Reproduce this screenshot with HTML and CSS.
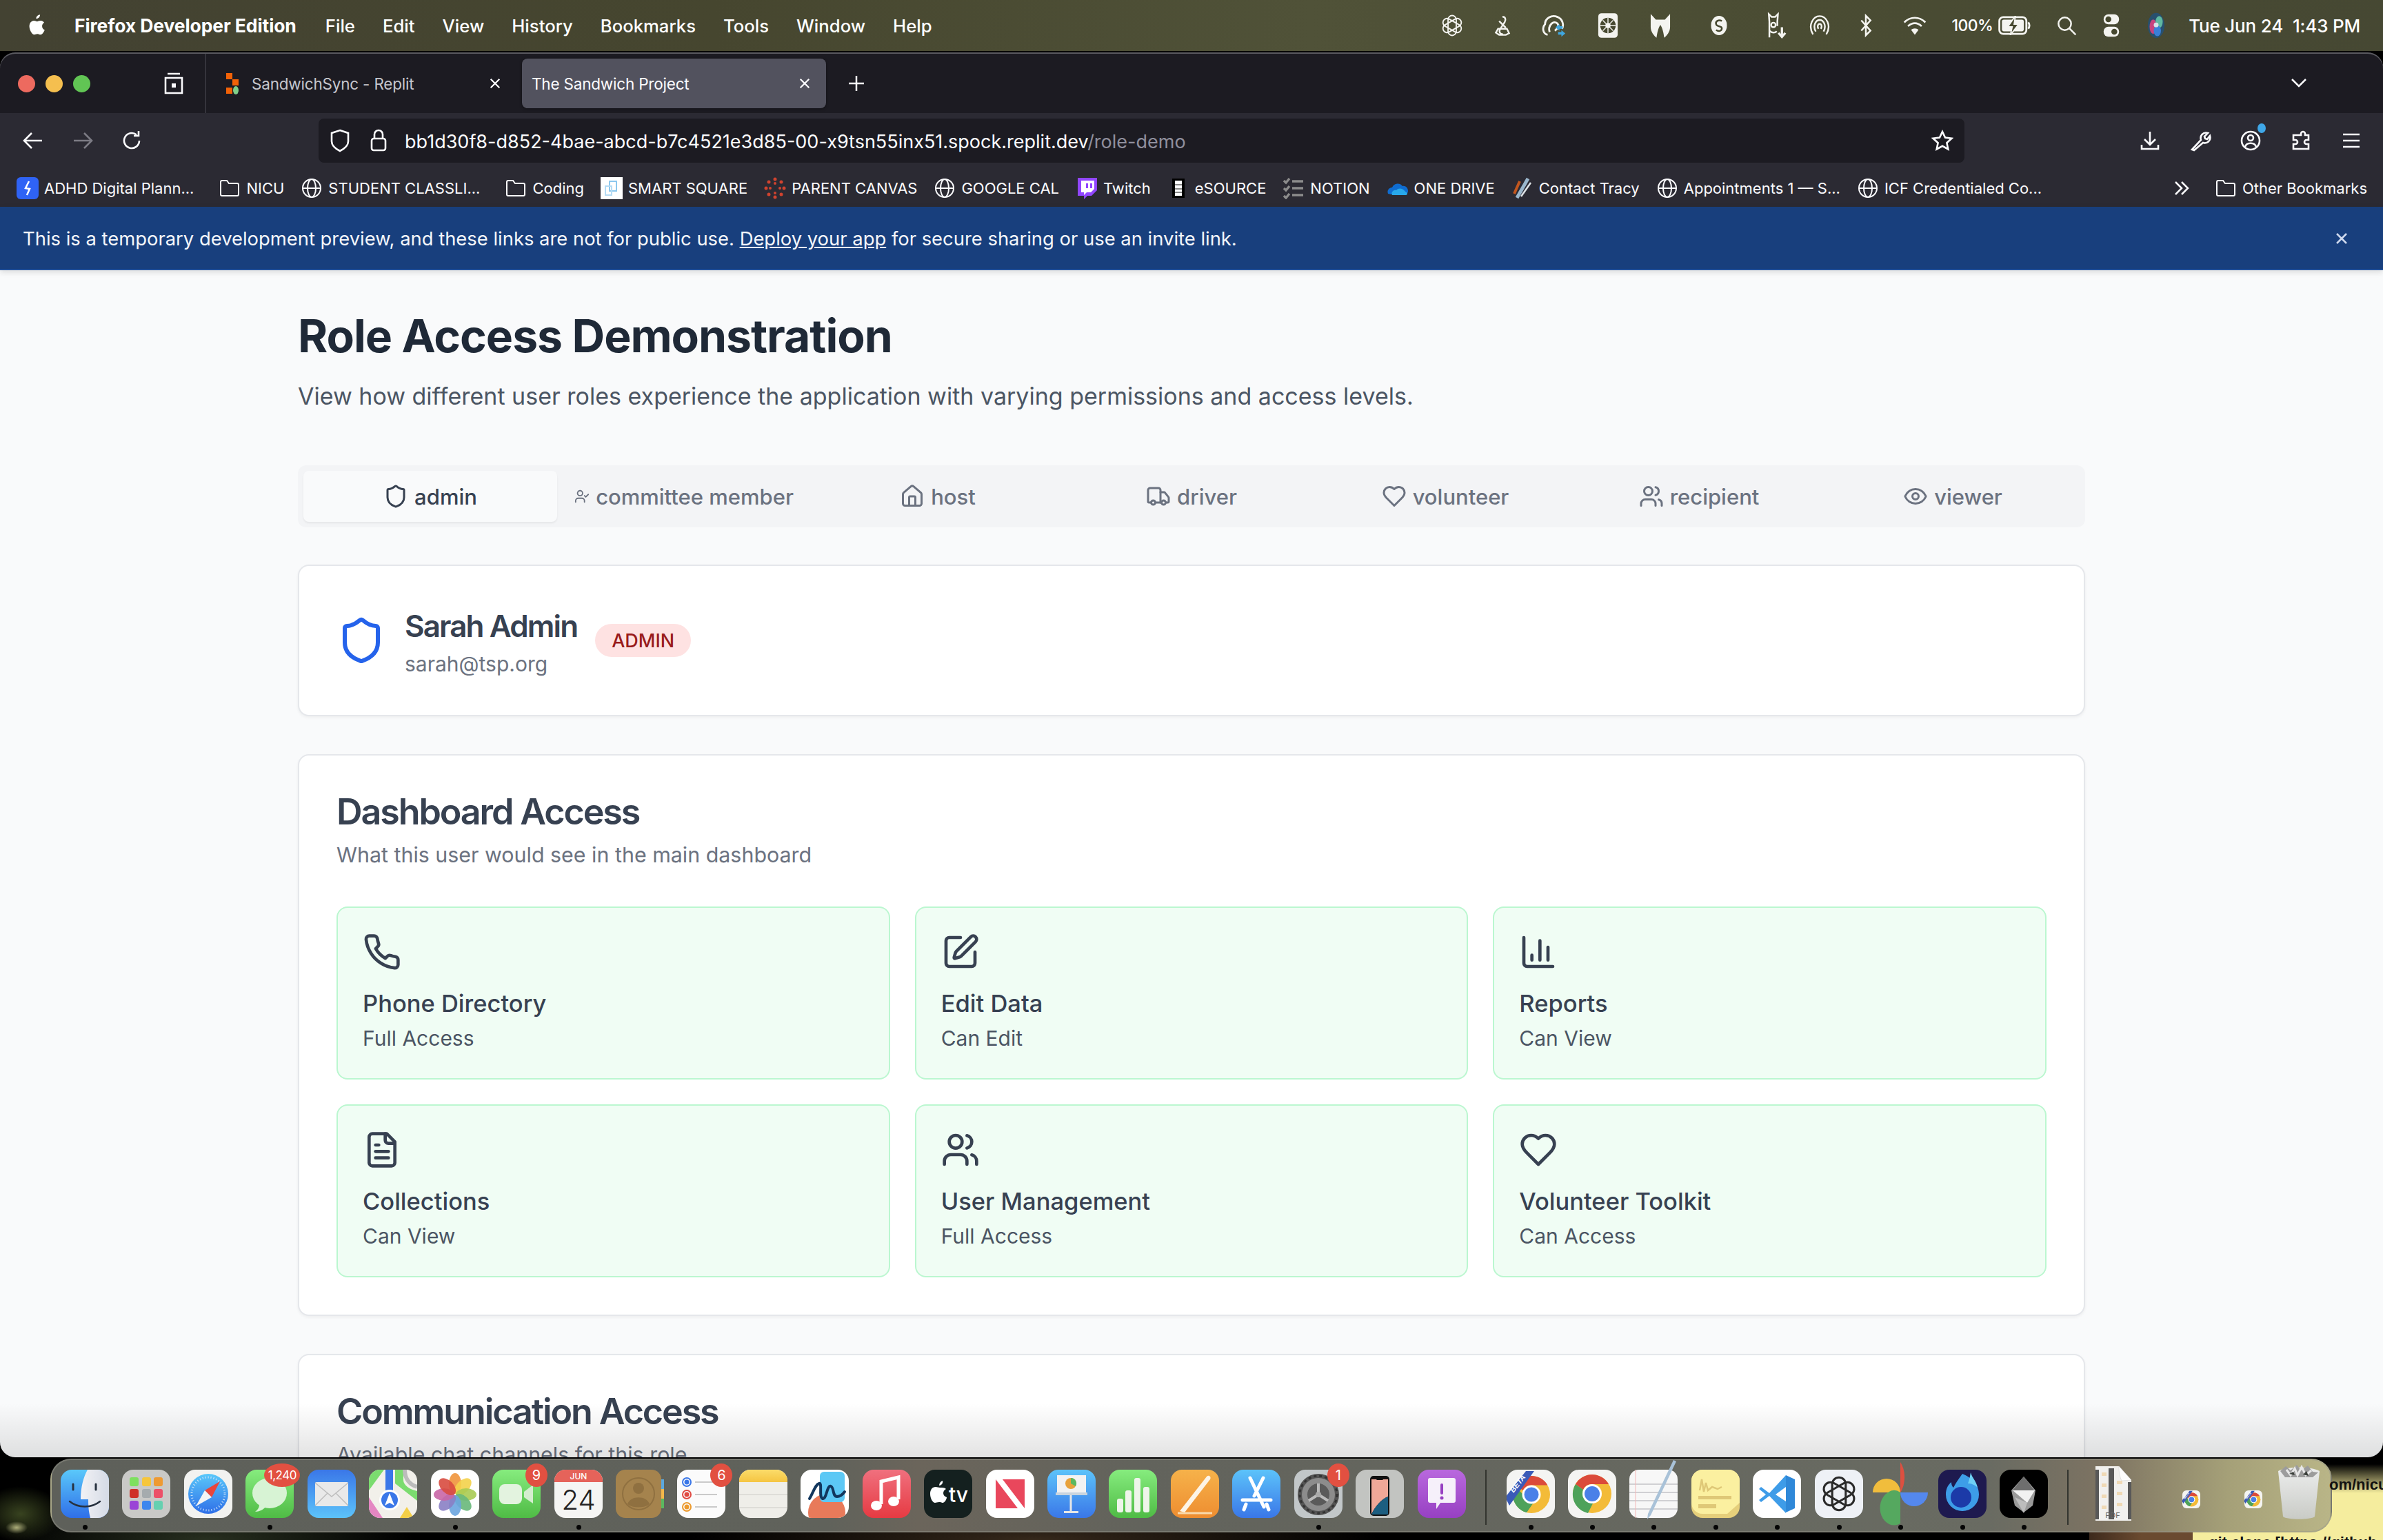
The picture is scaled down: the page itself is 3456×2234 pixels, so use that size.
FILE: index.html
```html
<!DOCTYPE html>
<html lang="en">
<head>
<meta charset="utf-8">
<title>The Sandwich Project</title>
<link rel="stylesheet" href="styles.css">
</head>
<body>
<svg class="defs" aria-hidden="true">
  <defs>
    <linearGradient id="gBlue" x1="0" y1="0" x2="0" y2="1"><stop offset="0" stop-color="#5ac8fa"/><stop offset="1" stop-color="#2f6fe8"/></linearGradient>
    <linearGradient id="gGreen" x1="0" y1="0" x2="0" y2="1"><stop offset="0" stop-color="#86ec7e"/><stop offset="1" stop-color="#4fbb45"/></linearGradient>
    <linearGradient id="gMail" x1="0" y1="0" x2="0" y2="1"><stop offset="0" stop-color="#3a77e8"/><stop offset="1" stop-color="#5cc3fa"/></linearGradient>
    <linearGradient id="gRed" x1="0" y1="0" x2="0" y2="1"><stop offset="0" stop-color="#f0707e"/><stop offset="1" stop-color="#e63a42"/></linearGradient>
    <linearGradient id="gOrange" x1="0" y1="0" x2="0" y2="1"><stop offset="0" stop-color="#f6b24a"/><stop offset="1" stop-color="#ee8d30"/></linearGradient>
    <linearGradient id="gPurple" x1="0" y1="0" x2="0" y2="1"><stop offset="0" stop-color="#b968de"/><stop offset="1" stop-color="#9740c2"/></linearGradient>
    <linearGradient id="gNote" x1="0" y1="0" x2="0" y2="1"><stop offset="0" stop-color="#fbdc6a"/><stop offset="1" stop-color="#f5c542"/></linearGradient>
    <linearGradient id="gFace" x1="0" y1="0" x2="1" y2="0"><stop offset="0" stop-color="#f2f2f5"/><stop offset="1" stop-color="#d5dbe6"/></linearGradient>
    <linearGradient id="gCan" x1="0" y1="0" x2="0" y2="1"><stop offset="0" stop-color="#eceded"/><stop offset="1" stop-color="#c9cbc6"/></linearGradient>
    <clipPath id="iconClip"><rect width="70" height="70" rx="16"/></clipPath>

    <symbol id="i-shield" viewBox="0 0 24 24"><path d="M20 13c0 5-3.5 7.5-7.66 8.95a1 1 0 0 1-.67-.01C7.5 20.5 4 18 4 13V6a1 1 0 0 1 1-1c2 0 4.5-1.2 6.24-2.72a1.17 1.17 0 0 1 1.52 0C14.51 3.81 17 5 19 5a1 1 0 0 1 1 1z"/></symbol>
    <symbol id="i-usercheck" viewBox="0 0 24 24"><path d="M16 21v-2a4 4 0 0 0-4-4H6a4 4 0 0 0-4 4v2"/><circle cx="9" cy="7" r="4"/><path d="M16 11l2 2 4-4"/></symbol>
    <symbol id="i-home" viewBox="0 0 24 24"><path d="M15 21v-8a1 1 0 0 0-1-1h-4a1 1 0 0 0-1 1v8"/><path d="M3 10a2 2 0 0 1 .709-1.528l7-5.999a2 2 0 0 1 2.582 0l7 5.999A2 2 0 0 1 21 10v9a2 2 0 0 1-2 2H5a2 2 0 0 1-2-2z"/></symbol>
    <symbol id="i-truck" viewBox="0 0 24 24"><path d="M14 18V6a2 2 0 0 0-2-2H4a2 2 0 0 0-2 2v11a1 1 0 0 0 1 1h2"/><path d="M15 18H9"/><path d="M19 18h2a1 1 0 0 0 1-1v-3.65a1 1 0 0 0-.22-.624l-3.48-4.35A1 1 0 0 0 17.52 8H14"/><circle cx="17" cy="18" r="2"/><circle cx="7" cy="18" r="2"/></symbol>
    <symbol id="i-heart" viewBox="0 0 24 24"><path d="M19 14c1.49-1.46 3-3.21 3-5.5A5.5 5.5 0 0 0 16.5 3c-1.76 0-3 .5-4.5 2-1.5-1.5-2.74-2-4.5-2A5.5 5.5 0 0 0 2 8.5c0 2.3 1.5 4.05 3 5.5l7 7Z"/></symbol>
    <symbol id="i-users" viewBox="0 0 24 24"><path d="M16 21v-2a4 4 0 0 0-4-4H6a4 4 0 0 0-4 4v2"/><circle cx="9" cy="7" r="4"/><path d="M22 21v-2a4 4 0 0 0-3-3.87"/><path d="M16 3.13a4 4 0 0 1 0 7.75"/></symbol>
    <symbol id="i-eye" viewBox="0 0 24 24"><path d="M2.062 12.348a1 1 0 0 1 0-.696 10.75 10.75 0 0 1 19.876 0 1 1 0 0 1 0 .696 10.75 10.75 0 0 1-19.876 0"/><circle cx="12" cy="12" r="3"/></symbol>
    <symbol id="i-phone" viewBox="0 0 24 24"><path d="M22 16.92v3a2 2 0 0 1-2.18 2 19.79 19.79 0 0 1-8.63-3.07 19.5 19.5 0 0 1-6-6 19.79 19.79 0 0 1-3.07-8.67A2 2 0 0 1 4.11 2h3a2 2 0 0 1 2 1.72 12.84 12.84 0 0 0 .7 2.81 2 2 0 0 1-.45 2.11L8.09 9.91a16 16 0 0 0 6 6l1.27-1.27a2 2 0 0 1 2.11-.45 12.84 12.84 0 0 0 2.81.7A2 2 0 0 1 22 16.92z"/></symbol>
    <symbol id="i-edit" viewBox="0 0 24 24"><path d="M12 3H5a2 2 0 0 0-2 2v14a2 2 0 0 0 2 2h14a2 2 0 0 0 2-2v-7"/><path d="M18.375 2.625a1 1 0 0 1 3 3l-9.013 9.014a2 2 0 0 1-.853.505l-2.873.84a.5.5 0 0 1-.62-.62l.84-2.873a2 2 0 0 1 .506-.852z"/></symbol>
    <symbol id="i-chart" viewBox="0 0 24 24"><path d="M3 3v16a2 2 0 0 0 2 2h16"/><path d="M18 17V9"/><path d="M13 17V5"/><path d="M8 17v-3"/></symbol>
    <symbol id="i-file" viewBox="0 0 24 24"><path d="M15 2H6a2 2 0 0 0-2 2v16a2 2 0 0 0 2 2h12a2 2 0 0 0 2-2V7Z"/><path d="M14 2v4a2 2 0 0 0 2 2h4"/><path d="M10 9H8"/><path d="M16 13H8"/><path d="M16 17H8"/></symbol>
    <symbol id="b-folder" viewBox="0 0 32 32"><path d="M3 7a2 2 0 0 1 2-2h7l3 4h12a2 2 0 0 1 2 2v14a2 2 0 0 1-2 2H5a2 2 0 0 1-2-2z"/></symbol>
    <symbol id="b-globe" viewBox="0 0 32 32"><circle cx="16" cy="16" r="13"/><ellipse cx="16" cy="16" rx="6" ry="13"/><path d="M3 16h26"/></symbol>
    <symbol id="s-knot" viewBox="0 0 40 40"><g transform="translate(20 20)"><rect x="-7" y="-17" width="14" height="34" rx="7"/><rect x="-7" y="-17" width="14" height="34" rx="7" transform="rotate(60)"/><rect x="-7" y="-17" width="14" height="34" rx="7" transform="rotate(120)"/></g></symbol>
    <symbol id="a-chrome" viewBox="0 0 70 70">
      <rect width="70" height="70" rx="16" fill="#f4f4f2"/>
      <circle cx="36" cy="36" r="27" fill="#f3bb38"/>
      <path d="M36 9a27 27 0 0 1 23.4 13.5H36A13.5 13.5 0 0 0 24 30L12.6 22.5A27 27 0 0 1 36 9z" fill="#db4a3a"/>
      <path d="M12.6 22.5 24 42a13.5 13.5 0 0 0 14 7L29 62A27 27 0 0 1 12.6 22.5z" fill="#4ea25a"/>
      <path d="M12 24 9 36a27 27 0 0 0 20 26L38 49a13.5 13.5 0 0 1-14-13z" fill="#4ea25a"/>
      <circle cx="36" cy="36" r="13.5" fill="#fff"/><circle cx="36" cy="36" r="10.5" fill="#4a80e8"/>
      <path d="M0 44 30 6l12 0L6 56z" fill="#3a5bb8" transform="translate(-2 -4)"/>
      <text x="0" y="0" class="beta" transform="translate(10 34) rotate(-52)">BETA</text>
    </symbol>
  </defs>
</svg>

<div class="wallpaper">
  <span class="bg-text-a">om/nicu</span>
  <span class="bg-text-b">git clone [https://github</span>
</div>

<header class="menubar">
  <svg class="apple" viewBox="0 0 24 28"><path d="M17 1c.2 2.2-1.900 5-4.600 4.800C12.100 3.300 14.600 1.200 17 1zM19.500 14.800c0-2.800 2.200-4.100 2.400-4.300-1.400-2-3.400-2.300-4.100-2.300-1.800-.2-3.400 1-4.300 1s-2.200-1-3.700-1c-1.900 0-3.600 1.100-4.600 2.800-2 3.400-.5 8.400 1.400 11.200.9 1.300 2.100 2.900 3.600 2.800 1.400-.1 2-.9 3.700-.9s2.200.9 3.700.9 2.500-1.400 3.400-2.700c1.100-1.500 1.500-3 1.500-3.100-.1 0-3-1.100-3-4.400z"/></svg>
  <nav class="menu">
    <b class="app-name">Firefox Developer Edition</b>
    <span>File</span><span>Edit</span><span>View</span><span>History</span><span>Bookmarks</span><span>Tools</span><span>Window</span><span>Help</span>
  </nav>
  <div class="status">
    <svg class="st st1" viewBox="0 0 40 40"><use href="#s-knot"/></svg>
    <svg class="st st2" viewBox="0 0 40 40"><path d="M20 4c5 0 7 5 4 10l-8 12c-3 5-1 10 5 10M12 26h16l4 8-6 3H14l-6-4zM14 12l12 12" /></svg>
    <svg class="st st3" viewBox="0 0 44 40"><path d="M12 34C5 33 3 24 8 18 8 9 18 3 27 7c8 3 10 12 7 18M15 30c-3-9 5-19 12-13 3 3 0 8-4 11"/><path class="st-blue" d="M30 18l-6 5 6 5v-3h5v-4h-5zM33 27l6 5-6 5v-3h-5v-4h5z"/></svg>
    <svg class="st st4" viewBox="0 0 32 40"><rect class="st-fill" x="1" y="1" width="30" height="38" rx="5"/><circle class="st-cut" cx="16" cy="20" r="12"/><circle class="st-fill" cx="16" cy="20" r="4"/><path class="st-spokes" d="M16 8v24M4 20h24M8 12l16 16M24 12 8 28"/></svg>
    <svg class="st st5" viewBox="0 0 32 40"><path class="st-fill" d="M1 2l8 9h14l8-9v20c0 8-5 13-9 17-1-6-2-14-6-20-4 6-5 14-6 20-4-4-9-9-9-17z"/></svg>
    <svg class="st st6" viewBox="0 0 34 40"><ellipse class="st-fill" cx="17" cy="20" rx="14" ry="17"/><path class="st-cutline" d="M22 12c-6-3-12 1-10 6s10 2 10 7-6 6-10 3"/></svg>
    <svg class="st st7" viewBox="0 0 40 46"><path d="M8 44V16l-1-13 5 5h6l5-5-1 13v8M8 32c5 5 10 4 13 1"/><circle cx="15" cy="22" r="4"/><path class="st-solidline" d="M30 26v16M24 36l6 7 6-7"/></svg>
    <svg class="st st8" viewBox="0 0 40 40"><path d="M8 36C-2 20 8 3 20 3s22 17 12 33M13 31C7 20 13 10 20 10s13 10 7 21M18 26c-3-4-1-9 2-9s5 5 2 9"/></svg>
    <svg class="st st9" viewBox="0 0 24 40"><path d="M4 11l16 18-8 8V3l8 8L4 29"/></svg>
    <svg class="st st10" viewBox="0 0 40 34"><path d="M3 12c10-10 24-10 34 0M9 18c7-6 15-6 22 0"/><path class="st-fill" d="M20 32l-6-8c3-3 9-3 12 0z"/></svg>
    <span class="batt-text">100%</span>
    <svg class="st st11" viewBox="0 0 50 30"><rect x="1" y="2" width="42" height="26" rx="6"/><rect class="st-fill" x="5" y="6" width="34" height="18" rx="3"/><path class="st-dark" d="M26 0 14 17h7l-3 13 13-17h-7z"/><path class="st-thin" d="M46 10c2 3 2 7 0 10"/></svg>
    <svg class="st st12" viewBox="0 0 36 36"><circle cx="15" cy="15" r="11"/><path d="M23 23l11 11"/></svg>
    <svg class="st st13" viewBox="0 0 28 40"><rect class="st-fill" x="1" y="1" width="26" height="17" rx="8"/><circle class="st-cut" cx="9" cy="9.500" r="5"/><rect class="st-fill" x="1" y="22" width="26" height="17" rx="8"/><circle class="st-cut" cx="19" cy="30.500" r="5"/></svg>
    <svg class="st st14" viewBox="0 0 30 44"><ellipse cx="15" cy="22" rx="14" ry="21" class="siri-base"/><ellipse cx="10" cy="24" rx="6" ry="12" class="siri-pink"/><ellipse cx="20" cy="16" rx="6" ry="10" class="siri-green"/><ellipse cx="17" cy="31" rx="6" ry="9" class="siri-blue"/><circle cx="15" cy="21" r="4" class="siri-white"/></svg>
    <time class="clock"><span>Tue Jun 24</span><span>1:43 PM</span></time>
  </div>
</header>

<main class="window">
  <div class="tabstrip">
    <div class="lights"><i class="l-red"></i><i class="l-yel"></i><i class="l-grn"></i></div>
    <svg class="tb-ico sidebar-ico" viewBox="0 0 30 32"><path d="M6 2h18M3 8h24v22H3z"/><rect class="tb-fill" x="12" y="16" width="6" height="6"/></svg>
    <div class="tabs">
      <div class="tab">
        <svg class="favicon" viewBox="0 0 24 32"><rect x="3" y="1" width="9" height="9" fill="#f26207"/><rect x="12" y="10" width="9" height="9" fill="#f26207"/><rect x="3" y="22" width="9" height="9" fill="#f26207"/><ellipse cx="17" cy="26" rx="4" ry="6" fill="#7fd08a"/></svg>
        <span class="tab-title">SandwichSync - Replit</span>
        <svg class="tab-x" viewBox="0 0 20 20"><path d="M3 3l14 14M17 3 3 17"/></svg>
      </div>
      <div class="tab tab-on">
        <span class="tab-title">The Sandwich Project</span>
        <svg class="tab-x" viewBox="0 0 20 20"><path d="M3 3l14 14M17 3 3 17"/></svg>
      </div>
      <svg class="tab-plus" viewBox="0 0 24 24"><path d="M12 1v22M1 12h22"/></svg>
    </div>
    <svg class="tab-chev" viewBox="0 0 24 14"><path d="M2 2l10 10L22 2"/></svg>
  </div>

  <div class="chrome">
    <div class="toolbar">
      <svg class="tb-ico" viewBox="0 0 32 32"><path d="M29 16H4M14 5 3 16l11 11"/></svg>
      <svg class="tb-ico tb-dim" viewBox="0 0 32 32"><path d="M3 16h25M18 5l11 11-11 11"/></svg>
      <svg class="tb-ico" viewBox="0 0 32 32"><path d="M26 16a11 11 0 1 1-4-8.500M25 2v7h-7"/></svg>
      <div class="urlbar">
        <svg class="ub-ico" viewBox="0 0 30 34"><path d="M15 2l12 4v12c0 7-6 11-12 14C9 29 3 25 3 18V6z"/></svg>
        <svg class="ub-ico" viewBox="0 0 26 34"><rect x="3" y="14" width="20" height="17" rx="3"/><path d="M7 14V8a6 6 0 0 1 12 0v6"/></svg>
        <span class="url">bb1d30f8-d852-4bae-abcd-b7c4521e3d85-00-x9tsn55inx51.spock.replit.dev<em>/role-demo</em></span>
        <svg class="ub-ico ub-star" viewBox="0 0 32 32"><path d="M16 3l4 8.600 9.400 1.200-7 6.400 1.900 9.300L16 23.800l-8.300 4.700 1.900-9.300-7-6.400 9.400-1.200z"/></svg>
      </div>
      <div class="tools">
        <svg class="tb-ico" viewBox="0 0 32 32"><path d="M16 3v19M8 14l8 8 8-8M4 22v6h24v-6"/></svg>
        <svg class="tb-ico" viewBox="0 0 32 32"><path d="M4 29 17 15c-2-6 3-12 10-10l-5 5 1 3 3 1 4-5c2 7-4 12-10 10L7 30z"/></svg>
        <span class="acct">
          <svg class="tb-ico" viewBox="0 0 32 32"><circle cx="16" cy="16" r="13"/><circle cx="16" cy="12" r="4"/><path d="M8 25c2-7 14-7 16 0"/></svg>
          <i class="acct-dot"></i>
        </span>
        <svg class="tb-ico" viewBox="0 0 32 32"><path d="M12 8h4V6a3 3 0 0 1 6 0v2h5v7h-3a3 3 0 0 0 0 6h3v7H5v-7h3a3 3 0 0 0 0-6H5V8z"/></svg>
        <svg class="tb-ico" viewBox="0 0 32 32"><path d="M4 7h24M4 16h24M4 25h24"/></svg>
      </div>
    </div>
    <div class="bookmarks">
      <a class="bm"><svg class="bm-ico" viewBox="0 0 32 32"><rect width="32" height="32" rx="6" fill="#2f63f5"/><path class="bm-white" d="M18 6l-5 10 6 1-4 9"/></svg>ADHD Digital Plann...</a>
      <a class="bm bm-f"><svg class="bm-ico bm-line"><use href="#b-folder"/></svg>NICU</a>
      <a class="bm"><svg class="bm-ico bm-line"><use href="#b-globe"/></svg>STUDENT CLASSLI...</a>
      <a class="bm bm-f"><svg class="bm-ico bm-line"><use href="#b-folder"/></svg>Coding</a>
      <a class="bm"><svg class="bm-ico" viewBox="0 0 32 32"><rect width="32" height="32" fill="#fff"/><rect x="13" y="6" width="10" height="14" fill="none" stroke="#8cc8ee" stroke-width="2"/><rect x="7" y="13" width="9" height="13" fill="none" stroke="#b5dcf5" stroke-width="2"/></svg>SMART SQUARE</a>
      <a class="bm"><svg class="bm-ico" viewBox="0 0 32 32"><g fill="#d0432f"><circle cx="16" cy="3" r="2.500"/><circle cx="16" cy="29" r="2.500"/><circle cx="3" cy="16" r="2.500"/><circle cx="29" cy="16" r="2.500"/><circle cx="7" cy="7" r="2.500"/><circle cx="25" cy="7" r="2.500"/><circle cx="7" cy="25" r="2.500"/><circle cx="25" cy="25" r="2.500"/><circle cx="9" cy="16" r="2"/><circle cx="23" cy="16" r="2"/><circle cx="16" cy="9" r="2"/><circle cx="16" cy="23" r="2"/></g></svg>PARENT CANVAS</a>
      <a class="bm"><svg class="bm-ico bm-line"><use href="#b-globe"/></svg>GOOGLE CAL</a>
      <a class="bm"><svg class="bm-ico" viewBox="0 0 32 32"><path fill="#9146ff" d="M3 1h28v18l-8 8h-6l-5 5v-5H3z"/><path fill="#fff" d="M8 5h19v12l-5 5h-6l-4 4v-4H8z"/><path fill="#9146ff" d="M15 9h3v7h-3zM21 9h3v7h-3z"/></svg>Twitch</a>
      <a class="bm"><svg class="bm-ico" viewBox="0 0 32 32"><rect x="7" y="2" width="18" height="28" fill="#000"/><rect x="11" y="5" width="10" height="22" fill="#fff"/><path d="M11 11h10M11 17h10M11 22h10" stroke="#888" stroke-width="2"/></svg>eSOURCE</a>
      <a class="bm"><svg class="bm-ico" viewBox="0 0 32 32"><path d="M2 5l3 3 5-6M14 6h16M2 16l3 3 5-6M14 16h16M2 27l3 3 5-6M14 26h16" fill="none" stroke="#8c8c8c" stroke-width="3.500"/></svg>NOTION</a>
      <a class="bm"><svg class="bm-ico" viewBox="0 0 32 32"><path fill="#0f6cd0" d="M2 24c-2-5 2-9 6-9 2-6 11-8 15-2 4-1 8 2 8 7 0 3-2 5-5 5H6z"/><path fill="#28a8ea" d="M8 26c-2-4 2-8 6-7 3-4 10-3 13 2 2 1 3 2 3 3 0 2-2 2-3 2z"/></svg>ONE DRIVE</a>
      <a class="bm"><svg class="bm-ico" viewBox="0 0 32 32"><path d="M8 30 24 2" stroke="#9ab6cc" stroke-width="5"/><path d="M4 24 12 6" stroke="#c2561e" stroke-width="4"/><path d="M14 28 28 8" stroke="#dfe4e8" stroke-width="2.500"/></svg>Contact Tracy</a>
      <a class="bm"><svg class="bm-ico bm-line"><use href="#b-globe"/></svg>Appointments 1 — S...</a>
      <a class="bm"><svg class="bm-ico bm-line"><use href="#b-globe"/></svg>ICF Credentialed Co...</a>
      <svg class="bm-more" viewBox="0 0 24 24"><path d="M3 3l9 9-9 9M12 3l9 9-9 9"/></svg>
      <a class="bm bm-f"><svg class="bm-ico bm-line"><use href="#b-folder"/></svg>Other Bookmarks</a>
    </div>
  </div>

  <div class="banner">
    <p>This is a temporary development preview, and these links are not for public use. <u>Deploy your app</u> for secure sharing or use an invite link.</p>
    <svg class="banner-x" viewBox="0 0 20 20"><path d="M3 3l14 14M17 3 3 17"/></svg>
  </div>

  <div class="page">
    <div class="container">
      <h1 class="title">Role Access Demonstration</h1>
      <p class="lede">View how different user roles experience the application with varying permissions and access levels.</p>

      <div class="role-tabs">
        <div class="role role-on"><svg class="ico"><use href="#i-shield"/></svg>admin</div>
        <div class="role"><svg class="ico ico-sm"><use href="#i-usercheck"/></svg>committee member</div>
        <div class="role"><svg class="ico"><use href="#i-home"/></svg>host</div>
        <div class="role"><svg class="ico"><use href="#i-truck"/></svg>driver</div>
        <div class="role"><svg class="ico"><use href="#i-heart"/></svg>volunteer</div>
        <div class="role"><svg class="ico"><use href="#i-users"/></svg>recipient</div>
        <div class="role"><svg class="ico"><use href="#i-eye"/></svg>viewer</div>
      </div>

      <section class="card user-card">
        <svg class="user-ico"><use href="#i-shield"/></svg>
        <div class="user-text">
          <h2 class="user-name">Sarah Admin</h2>
          <p class="user-mail">sarah@tsp.org</p>
        </div>
        <span class="pill">ADMIN</span>
      </section>

      <section class="card section">
        <h2 class="sec-title">Dashboard Access</h2>
        <p class="sec-sub">What this user would see in the main dashboard</p>
        <div class="grid">
          <article class="perm"><svg class="perm-ico"><use href="#i-phone"/></svg><h3>Phone Directory</h3><p>Full Access</p></article>
          <article class="perm"><svg class="perm-ico"><use href="#i-edit"/></svg><h3>Edit Data</h3><p>Can Edit</p></article>
          <article class="perm"><svg class="perm-ico"><use href="#i-chart"/></svg><h3>Reports</h3><p>Can View</p></article>
          <article class="perm"><svg class="perm-ico"><use href="#i-file"/></svg><h3>Collections</h3><p>Can View</p></article>
          <article class="perm"><svg class="perm-ico"><use href="#i-users"/></svg><h3>User Management</h3><p>Full Access</p></article>
          <article class="perm"><svg class="perm-ico"><use href="#i-heart"/></svg><h3>Volunteer Toolkit</h3><p>Can Access</p></article>
        </div>
      </section>

      <section class="card section">
        <h2 class="sec-title">Communication Access</h2>
        <p class="sec-sub">Available chat channels for this role</p>
      </section>
    </div>
  </div>
</main>

<footer class="dock">
  <div class="app on"><svg viewBox="0 0 70 70"><rect width="70" height="70" rx="16" fill="url(#gBlue)"/><path d="M39 0h15a16 16 0 0 1 16 16v38a16 16 0 0 1-16 16H43c-2-8-3-14-3-27H29c0-18 4-32 10-43z" fill="url(#gFace)"/><path d="M18 21v8M51 21v8" stroke="#27313f" stroke-width="3" stroke-linecap="round"/><path d="M13 46c12 10 32 10 44 0" fill="none" stroke="#27313f" stroke-width="2.500" stroke-linecap="round"/></svg></div>
  <div class="app"><svg viewBox="0 0 70 70"><rect width="70" height="70" rx="16" fill="#c9c9c7"/><rect x="11" y="11" width="13" height="13" rx="3" fill="#7ee05f"/><rect x="29" y="11" width="13" height="13" rx="3" fill="#f6c63c"/><rect x="46" y="11" width="13" height="13" rx="3" fill="#ee9a33"/><rect x="11" y="28" width="13" height="13" rx="3" fill="#cf3128"/><rect x="29" y="28" width="13" height="13" rx="3" fill="#a5abae"/><rect x="46" y="28" width="13" height="13" rx="3" fill="#ec5068"/><rect x="11" y="45" width="13" height="13" rx="3" fill="#9a44d6"/><rect x="29" y="45" width="13" height="13" rx="3" fill="#3c86ee"/><rect x="46" y="45" width="13" height="13" rx="3" fill="#66d0b0"/></svg></div>
  <div class="app"><svg viewBox="0 0 70 70"><rect width="70" height="70" rx="16" fill="#f2f2f0"/><circle cx="35" cy="35" r="29" fill="url(#gBlue)"/><circle cx="35" cy="35" r="24" fill="none" stroke="#d5e8f8" stroke-width="3" stroke-dasharray="1 3"/><path d="M52 17 30 30l10 10z" fill="#e8453c"/><path d="M17 53l23-13-10-10z" fill="#f4f4f4"/></svg></div>
  <div class="app on"><svg viewBox="0 0 70 70"><rect width="70" height="70" rx="16" fill="url(#gGreen)"/><ellipse cx="35" cy="34" rx="25" ry="22" fill="#d7f3d4"/><path d="M20 50c0 5-2 8-6 11 6 0 12-3 15-7z" fill="#d7f3d4"/></svg><b class="badge badge-wide">1,240</b></div>
  <div class="app"><svg viewBox="0 0 70 70"><rect width="70" height="70" rx="16" fill="url(#gMail)"/><rect x="11" y="18" width="48" height="35" rx="2" fill="#e9e9e9"/><path d="M11 19l24 20 24-20M11 52l18-18M59 52 41 34" fill="none" stroke="#bdbdbd" stroke-width="1.500"/></svg></div>
  <div class="app"><svg viewBox="0 0 70 70"><g clip-path="url(#iconClip)"><rect width="70" height="70" fill="#f2f0ea"/><path d="M0 0h22l-22 30z" fill="#7bdc6f"/><path d="M38 0h12v15c0 8 10 14 20 16v14L38 20z" fill="#7bdc6f"/><path d="M0 40l20 30H0z" fill="#e486c2"/><path d="M45 70l10-16 10 16z" fill="#f4cf47"/><path d="M24 0h11v34H24z" fill="#3a77e8"/><path d="M52 0c0 14 8 22 18 25" fill="none" stroke="#bcbcbc" stroke-width="6"/><circle cx="30" cy="44" r="15" fill="#fff"/><circle cx="30" cy="44" r="12" fill="#3a77e8"/><path d="M30 34l7 18-7-4-7 4z" fill="#fff"/></g></svg></div>
  <div class="app on"><svg viewBox="0 0 70 70"><rect width="70" height="70" rx="16" fill="#fff"/><g transform="translate(35 36)"><ellipse cy="-16" rx="9" ry="15" fill="#f0953c" opacity=".9"/><ellipse cy="-16" rx="9" ry="15" fill="#f4d14a" opacity=".9" transform="rotate(45)"/><ellipse cy="-16" rx="9" ry="15" fill="#a8cb52" opacity=".9" transform="rotate(90)"/><ellipse cy="-16" rx="9" ry="15" fill="#68b87a" opacity=".9" transform="rotate(135)"/><ellipse cy="-16" rx="9" ry="15" fill="#6aa5df" opacity=".9" transform="rotate(180)"/><ellipse cy="-16" rx="9" ry="15" fill="#8a7fc4" opacity=".9" transform="rotate(225)"/><ellipse cy="-16" rx="9" ry="15" fill="#c966a6" opacity=".9" transform="rotate(270)"/><ellipse cy="-16" rx="9" ry="15" fill="#d84b3f" opacity=".9" transform="rotate(315)"/></g></svg></div>
  <div class="app"><svg viewBox="0 0 70 70"><rect width="70" height="70" rx="16" fill="url(#gGreen)"/><rect x="10" y="21" width="33" height="29" rx="8" fill="#e3f3df"/><path d="M46 32l13-10v27L46 40z" fill="#d4edcf"/></svg><b class="badge">9</b></div>
  <div class="app on"><svg viewBox="0 0 70 70"><rect width="70" height="70" rx="16" fill="#f5f5f3"/><path d="M0 18V16A16 16 0 0 1 16 0h38a16 16 0 0 1 16 16v2z" fill="#e5635a"/><text x="35" y="14" class="cal-m">JUN</text><text x="35" y="58" class="cal-d">24</text></svg></div>
  <div class="app"><svg viewBox="0 0 70 70"><rect x="58" y="14" width="12" height="14" fill="#5aa8e0"/><rect x="58" y="28" width="12" height="14" fill="#f4b74a"/><rect x="58" y="42" width="12" height="14" fill="#5ab860"/><rect width="66" height="70" rx="14" fill="#a5834d"/><circle cx="33" cy="35" r="23" fill="none" stroke="#8f7040" stroke-width="2"/><circle cx="33" cy="27" r="8" fill="#8f7040"/><path d="M17 50c4-13 28-13 32 0-8 6-24 6-32 0z" fill="#8f7040"/></svg></div>
  <div class="app"><svg viewBox="0 0 70 70"><rect width="70" height="70" rx="16" fill="#fbfbfb"/><circle cx="14" cy="18" r="6" fill="none" stroke="#3a77e8" stroke-width="2"/><circle cx="14" cy="18" r="3.500" fill="#3a77e8"/><circle cx="14" cy="36" r="6" fill="none" stroke="#e04a42" stroke-width="2"/><circle cx="14" cy="36" r="3.500" fill="#e04a42"/><circle cx="14" cy="54" r="6" fill="none" stroke="#ec9a2e" stroke-width="2"/><circle cx="14" cy="54" r="3.500" fill="#ec9a2e"/><path d="M26 18h32M26 36h32M26 54h32" stroke="#bbb" stroke-width="1.500"/></svg><b class="badge">6</b></div>
  <div class="app"><svg viewBox="0 0 70 70"><rect width="70" height="70" rx="16" fill="#efeee9"/><path d="M0 18V16A16 16 0 0 1 16 0h38a16 16 0 0 1 16 16v2z" fill="url(#gNote)"/><path d="M0 36h70M0 55h70" stroke="#d9d8d2" stroke-width="1.500"/></svg></div>
  <div class="app"><svg viewBox="0 0 70 70"><g clip-path="url(#iconClip)"><rect width="70" height="70" fill="#fff"/><circle cx="38" cy="62" r="27" fill="#e87a5a"/><rect x="28" y="3" width="36" height="44" rx="6" fill="#5cc8f5"/><path d="M13 42c6-10 8-20 14-22 5-2-1 20 5 22 6 1 6-20 12-18 5 2 2 15 9 15 4 0 8-3 11-7" fill="none" stroke="#12375e" stroke-width="4" stroke-linecap="round"/></g></svg></div>
  <div class="app"><svg viewBox="0 0 70 70"><rect width="70" height="70" rx="16" fill="url(#gRed)"/><path d="M27 50V17l25-6v32" fill="none" stroke="#fff" stroke-width="5"/><ellipse cx="20" cy="52" rx="8" ry="7" fill="#fff"/><ellipse cx="45" cy="46" rx="8" ry="7" fill="#fff"/></svg></div>
  <div class="app"><svg viewBox="0 0 70 70"><rect width="70" height="70" rx="16" fill="#14201f"/><path d="M23 26c-2 0-4-1-6-1-5 0-8 4-8 10 0 7 4 13 7 13 2 0 3-1 6-1s3 1 5 1c3 0 6-5 6-8-3-1-5-3-5-6s2-5 4-6c-2-2-5-2-9-2zM22 23c0-3 2-6 5-7 1 4-2 7-5 7z" fill="#fff"/><text x="50" y="47" class="tv-t">tv</text></svg></div>
  <div class="app"><svg viewBox="0 0 70 70"><rect width="70" height="70" rx="16" fill="#fff"/><rect x="14" y="14" width="42" height="42" fill="#e9475c"/><path d="M14 14h10l32 42H46z" fill="#fff"/><path d="M14 26l22 30H14z" fill="#e9475c"/></svg></div>
  <div class="app"><svg viewBox="0 0 70 70"><rect width="70" height="70" rx="16" fill="url(#gMail)" transform="rotate(180 35 35)"/><rect x="14" y="8" width="42" height="26" fill="#f2f2f2"/><rect x="12" y="33" width="46" height="4" fill="#c9d4de"/><circle cx="34" cy="20" r="8" fill="#e8a23c"/><path d="M34 20V12a8 8 0 0 1 7 12z" fill="#5ab860"/><path d="M34 37v24" stroke="#e6e6e6" stroke-width="3"/><rect x="24" y="60" width="21" height="3" fill="#e6e6e6"/></svg></div>
  <div class="app"><svg viewBox="0 0 70 70"><rect width="70" height="70" rx="16" fill="url(#gGreen)"/><g fill="#eef5ea"><rect x="12" y="42" width="9" height="20" rx="3"/><rect x="24" y="30" width="9" height="32" rx="3"/><rect x="37" y="12" width="9" height="50" rx="3"/><rect x="50" y="25" width="9" height="37" rx="3"/></g></svg></div>
  <div class="app"><svg viewBox="0 0 70 70"><rect width="70" height="70" rx="16" fill="url(#gOrange)"/><path d="M13 60 52 10c3-3 7 0 5 4L20 62z" fill="#fdf4e6"/><path d="M10 63l50 0" stroke="#f9d9ac" stroke-width="3"/></svg></div>
  <div class="app"><svg viewBox="0 0 70 70"><rect width="70" height="70" rx="16" fill="url(#gMail)" transform="rotate(180 35 35)"/><path d="M26 12l20 42M45 12 32 38M15 44h41M20 50l-3 8M50 50l3 8" fill="none" stroke="#fff" stroke-width="5" stroke-linecap="round"/></svg></div>
  <div class="app on"><svg viewBox="0 0 70 70"><rect width="70" height="70" rx="16" fill="#c2c7c9"/><circle cx="35" cy="36" r="30" fill="#545454"/><circle cx="35" cy="36" r="24" fill="#8c8c8c"/><circle cx="35" cy="36" r="16" fill="#5a5a5a"/><path d="M35 36V20M35 36 21 45M35 36l14 9" stroke="#bbb" stroke-width="4"/><circle cx="35" cy="36" r="4" fill="#aaa"/><circle cx="35" cy="36" r="27" fill="none" stroke="#333" stroke-width="3" stroke-dasharray="4 4"/></svg><b class="badge">1</b></div>
  <div class="app"><svg viewBox="0 0 70 70"><rect width="70" height="70" rx="16" fill="#c2c4c1"/><rect x="21" y="11" width="28" height="58" rx="5" fill="#111" transform="translate(0 -2)"/><path d="M23 14h24v25c-10 4-20 16-24 26z" fill="#f0a898"/><path d="M47 39v26H23c4-10 14-22 24-26z" fill="#1c5e80"/><rect x="30" y="12" width="10" height="3" rx="1.500" fill="#111"/></svg></div>
  <div class="app"><svg viewBox="0 0 70 70"><rect width="70" height="70" rx="16" fill="url(#gPurple)"/><path d="M18 12h34a3 3 0 0 1 3 3v30a3 3 0 0 1-3 3H33l-6 9v-9h-9a3 3 0 0 1-3-3V15a3 3 0 0 1 3-3z" fill="#f6f0fa"/><rect x="33" y="20" width="4" height="16" rx="2" fill="#9740c2"/><circle cx="35" cy="41" r="2.500" fill="#9740c2"/></svg></div>
  <i class="dock-sep"></i>
  <div class="app on"><svg viewBox="0 0 70 70"><use href="#a-chrome"/></svg></div>
  <div class="app on"><svg viewBox="0 0 70 70"><rect width="70" height="70" rx="16" fill="#f4f4f2"/><circle cx="35" cy="35" r="28" fill="#f3bb38"/><path d="M35 7a28 28 0 0 1 24 14H35a14 14 0 0 0-13 8L11 21A28 28 0 0 1 35 7z" fill="#db4a3a"/><path d="M11 21l11 8c-2 8 3 18 14 20l-7 14A28 28 0 0 1 11 21z" fill="#4ea25a"/><circle cx="35" cy="35" r="14" fill="#fff"/><circle cx="35" cy="35" r="11" fill="#4a80e8"/></svg></div>
  <div class="app on"><svg viewBox="0 0 70 70"><rect width="70" height="70" rx="14" fill="#f7f7f7"/><path d="M0 21h70M0 33h70M0 45h70M0 57h70" stroke="#c4c4c8" stroke-width="1.500"/><path d="M9 0v70" stroke="#f3b6b6" stroke-width="1"/><path d="M64-14 27 64l-1 8 5-6L68-12z" fill="#a9c2d8"/></svg></div>
  <div class="app on"><svg viewBox="0 0 70 70"><path d="M0 16A16 16 0 0 1 16 0h38a16 16 0 0 1 16 16v38a16 16 0 0 1-16 16H16A16 16 0 0 1 0 54z" fill="#e5cf7b"/><path d="M0 16A16 16 0 0 1 16 0h38a16 16 0 0 1 16 16v32L52 64H16A16 16 0 0 1 0 48z" fill="#fbf0a0"/><path d="M12 30l3-16 3 18 3-13 3 11 6-5 8 3 6-3" fill="none" stroke="#dfc877" stroke-width="2.500"/><rect x="10" y="38" width="48" height="5" fill="#dfc877"/><rect x="10" y="50" width="26" height="6" fill="#dfc877"/></svg></div>
  <div class="app on"><svg viewBox="0 0 70 70"><rect width="70" height="70" rx="16" fill="#fff"/><path d="M48 8l13 6v42l-13 6z" fill="#2f88d8"/><path d="M48 8 24 34 12 25l-3 3 10 8-10 8 3 3 12-9 24 25V46L33 36l15-11z" fill="#3e9ce8"/></svg></div>
  <div class="app on"><svg viewBox="0 0 70 70"><rect width="70" height="70" rx="16" fill="#eef1f6"/><g fill="none" stroke="#2a2a2a" stroke-width="2.200"><use href="#s-knot" x="7" y="7" width="56" height="56"/></g></svg></div>
  <div class="app on app-ov"><svg viewBox="0 0 80 90"><path d="M40 0a16 28 0 0 1 0 44z" fill="#dd5040" transform="translate(0 1)"/><path d="M0 45a20 20 0 0 1 40 0z" fill="#f1bd3c"/><path d="M40 45h40a20 20 0 0 1-40 0z" fill="#5488ee"/><path d="M40 45a24 44 0 0 0-18 0 18 22 0 0 0 18 45z" fill="#55a85f"/></svg></div>
  <div class="app on"><svg viewBox="0 0 70 70"><rect width="70" height="70" rx="16" fill="#1e1a4f"/><path d="M35 6c12 5 24 14 24 30a24 24 0 0 1-48 0c0-8 3-14 8-18 0 4 1 6 3 8 3-6 7-12 13-20z" fill="#3d9de8"/><circle cx="33" cy="40" r="15" fill="#1c3aa8"/><path d="M47 4c2 8 8 12 10 22-5-5-10-6-14-6 2-5 3-10 4-16z" fill="#6ed0f5"/></svg></div>
  <div class="app on"><svg viewBox="0 0 70 70"><rect width="70" height="70" rx="16" fill="#000"/><path d="M35 10 52 30l-4 22-13 10-13-10-5-22z" fill="#9a9a9a"/><path d="M19 30 35 10l15 20z" fill="#6e6e6e"/><path d="M19 30h32L40 48z" fill="#f2f2f2"/><path d="M35 63 22 40l18 8z" fill="#bdbdbd"/></svg></div>
  <i class="dock-sep dock-sep2"></i>
  <div class="doc"><svg viewBox="0 0 56 82"><path d="M3 1h34l18 20v59H3z" fill="#f1f0ee"/><path d="M22 4h8v74h-8zM3 6h5v72H3zM50 24h5v54h-5z" fill="#585858"/><path d="M12 10h7v5h-7zM12 26h7v5h-7zM12 42h7v5h-7zM12 58h7v5h-7zM34 22h8v5h-8zM34 38h8v5h-8zM34 54h8v5h-8z" fill="#efd9b5"/><path d="M37 1l18 20-14 1c-3-6-4-12-4-21z" fill="#fdfdfd" stroke="#ccc" stroke-width=".5"/><text x="28" y="76" class="pdf-t">PDF</text></svg></div>
  <div class="mini mini1"><svg viewBox="0 0 70 70"><use href="#a-chrome"/></svg></div>
  <div class="mini mini2"><svg viewBox="0 0 70 70"><use href="#a-chrome"/></svg></div>
  <div class="trash"><svg viewBox="0 0 64 82"><path d="M2 10c12-7 48-7 60 0l-7 66c-6 5-40 5-46 0z" fill="url(#gCan)"/><path d="M5 10l8-7 7 6 9-8 6 8 10-7 7 9 8 1-8 7H12z" fill="#9c9c9c"/><path d="M14 8l6 8 6-10 4 10 6-12 6 12 8-7" fill="none" stroke="#e8e8e8" stroke-width="3"/><path d="M18 14l6-3 2 5zM38 15l5-5 3 7z" fill="#3a3f3a"/></svg></div>
</footer>
</body>
</html>
```

FILE: styles.css
```css
* { box-sizing: border-box; }
html, body { margin: 0; padding: 0; }
body {
  position: relative;
  width: 3456px;
  height: 2234px;
  overflow: hidden;
  background: #000;
  font-family: Inter, "Noto Sans", sans-serif;
  color: #111827;
}
.defs { position: absolute; width: 0; height: 0; }
svg { display: block; flex: none; }

/* desktop behind everything */
.wallpaper {
  position: absolute;
  left: 0; right: 0; top: 2116px; bottom: 0;
  overflow: hidden;
  background:
    radial-gradient(ellipse 16px 9px at 24px 100px, rgba(210,210,150,.8), transparent),
    radial-gradient(ellipse 60px 40px at 30px 80px, rgba(80,95,45,.7), transparent),
    radial-gradient(ellipse 300px 60px at 300px 118px, rgba(50,60,40,.8), transparent),
    radial-gradient(ellipse 500px 50px at 1500px 118px, rgba(60,45,30,.9), transparent),
    #000;
}
.wallpaper::before {
  content: "";
  position: absolute;
  left: 3030px; right: 0; top: 0; bottom: 0;
  background: linear-gradient(to right, #3d2a1c 0, #6a4a30 75px, #6a4a30 150px, #f5ed9e 150px, #f5ed9e 100%);
}
.wallpaper::after {
  content: "";
  position: absolute;
  left: 3030px; right: 0; top: 0; height: 50px;
  background: linear-gradient(to bottom, #000 0, #000 8px, rgba(0,0,0,0) 50px);
}
.bg-text-a, .bg-text-b {
  position: absolute;
  z-index: 1;
  font-family: "Liberation Sans", sans-serif;
  font-weight: 700;
  font-size: 22px;
  line-height: 26px;
  color: #111;
  white-space: nowrap;
}
.bg-text-a { left: 3378px; top: 25px; }
.bg-text-b { left: 3203px; top: 109px; }

/* menu bar */
.menubar {
  position: relative;
  height: 74px;
  display: flex;
  align-items: center;
  background: linear-gradient(to right, #434232 0, #46462f 30%, #505238 55%, #4a4c33 75%, #464833 100%);
  color: #fff;
  font-size: 25.700px;
  font-weight: 500;
}
.apple { width: 30px; height: 34px; margin-left: 37px; fill: #fff; }
.menu { display: flex; align-items: center; gap: 40px; margin-left: 41px; }
.app-name { font-size: 26.500px; font-weight: 700; letter-spacing: -.1px; margin-right: 2px; }
.status { position: absolute; inset: 0 0 0 auto; display: flex; align-items: center; }
.st { fill: none; stroke: #f4f4f0; stroke-width: 3; height: 38px; }
.st-fill { fill: #f4f4f0; stroke: none; }
.st-cut { fill: #46482f; stroke: none; }
.st-cutline { fill: none; stroke: #46482f; stroke-width: 3; }
.st-spokes { fill: none; stroke: #f4f4f0; stroke-width: 1.500; }
.st-dark { fill: #46482f; stroke: #f4f4f0; stroke-width: 2; }
.st-thin { stroke-width: 3; }
.st-blue { fill: #3fa7e0; stroke: none; }
.st-solidline { stroke-width: 4; }
.st1 { width: 34px; stroke-width: 2.200; }
.st2 { width: 32px; margin-left: 40px; }
.st3 { width: 42px; margin-left: 38px; }
.st4 { width: 30px; margin-left: 42px; }
.st5 { width: 30px; margin-left: 46px; }
.st6 { width: 28px; margin-left: 56px; }
.st7 { width: 34px; margin-left: 52px; }
.st8 { width: 32px; margin-left: 30px; }
.st9 { width: 20px; margin-left: 41px; }
.st10 { width: 36px; margin-left: 43px; height: 32px; }
.batt-text { margin-left: 36px; font-size: 23px; font-weight: 500; letter-spacing: -.6px; }
.st11 { width: 48px; margin-left: 8px; height: 28px; }
.st12 { width: 30px; margin-left: 36px; height: 32px; }
.st13 { width: 24px; margin-left: 38px; }
.st14 { width: 26px; margin-left: 40px; height: 40px; stroke: none; }
.siri-base { fill: #28506e; }
.siri-pink { fill: #c8427e; }
.siri-green { fill: #5fb8a0; }
.siri-blue { fill: #3a7fd8; }
.siri-white { fill: #d8dfe8; }
.clock { display: flex; gap: 14px; margin-left: 34px; margin-right: 33px; font-size: 26px; letter-spacing: -.2px; }

/* browser window */
.window {
  position: relative;
  height: 2038px;
  margin-top: 2px;
  display: flex;
  flex-direction: column;
  border-radius: 22px;
  overflow: hidden;
  background: #1c1b22;
  box-shadow: inset 0 2px 0 #5a5a60;
}
.window::after {
  content: "";
  position: absolute;
  left: 0; right: 0; bottom: 0;
  height: 78px;
  background: linear-gradient(to bottom, rgba(0,0,0,0), rgba(0,0,0,.11));
  pointer-events: none;
}
.tabstrip {
  height: 88px;
  flex: none;
  display: flex;
  align-items: center;
  padding: 2px 0 0 26px;
  color: #fbfbfe;
  font-size: 22.500px;
  position: relative;
}
.lights { display: flex; gap: 15px; }
.lights i { width: 25px; height: 25px; border-radius: 50%; }
.l-red { background: #ed6a5f; }
.l-yel { background: #f5bf4f; }
.l-grn { background: #61c554; }
.sidebar-ico { width: 30px; height: 32px; margin-left: 105px; }
.tabs {
  display: flex;
  align-items: center;
  margin-left: 30px;
  height: 100%;
  border-left: 1px solid #4a4a52;
}
.tab {
  width: 440px;
  height: 72px;
  display: flex;
  align-items: center;
  padding: 0 12px 0 26px;
  gap: 16px;
  border-radius: 8px;
  color: #c6c6cc;
  margin-right: 18px;
}
.favicon { width: 24px; height: 32px; }
.tab-title { flex: 1; white-space: nowrap; letter-spacing: -.2px; }
.tab-x { width: 18px; height: 18px; fill: none; stroke: #fbfbfe; stroke-width: 2.5; }
.tab-on {
  width: 441px;
  margin: 0;
  padding: 0 22px 0 14px;
  background: #52525e;
  color: #fbfbfe;
  box-shadow: 0 1px 4px rgba(0,0,0,.4);
}
.tab-plus { width: 24px; height: 24px; margin-left: 32px; fill: none; stroke: #fbfbfe; stroke-width: 2.5; }
.tab-chev { position: absolute; right: 110px; top: 37px; width: 24px; height: 14px; fill: none; stroke: #fbfbfe; stroke-width: 2.5; }
.chrome { flex: none; background: #2b2a33; height: 136px; }
.toolbar { height: 80px; display: flex; align-items: center; padding: 0 32px; gap: 40px; }
.tb-ico { width: 32px; height: 32px; fill: none; stroke: #fbfbfe; stroke-width: 2.6; }
.tb-dim { stroke: #7c7b84; }
.tb-fill { fill: #fbfbfe; stroke: none; }
.urlbar {
  flex: none;
  width: 2387px;
  height: 64px;
  margin-left: 214px;
  display: flex;
  align-items: center;
  padding: 0 16px;
  background: #1c1b22;
  border-radius: 8px;
}
.ub-ico { width: 30px; height: 34px; fill: none; stroke: #fbfbfe; stroke-width: 2.6; }
.ub-ico + .ub-ico { margin-left: 26px; }
.url { flex: 1; margin-left: 23px; padding-top: 2px; font-size: 27px; color: #fbfbfe; white-space: nowrap; }
.url em { font-style: normal; color: #8f8f9d; }
.ub-star { width: 32px; height: 32px; }
.tools { display: flex; align-items: center; gap: 41px; margin-left: 213px; position: relative; }
.acct { position: relative; display: block; }
.acct-dot { position: absolute; right: -6px; top: -9px; width: 12px; height: 14px; border-radius: 50%; background: #3fa7e8; }
.bookmarks {
  height: 56px;
  display: flex;
  align-items: center;
  padding: 2px 23px 0 24px;
  gap: 24px;
  color: #fbfbfe;
  font-size: 22px;
  white-space: nowrap;
}
.bm { display: flex; align-items: center; gap: 8px; }
.bm-f { margin-left: 12px; }
.bm-ico { width: 32px; height: 32px; }
.bm-line { fill: none; stroke: #fbfbfe; stroke-width: 2; }
.bm-white { fill: none; stroke: #fff; stroke-width: 2.500; }
.bm-more { width: 24px; height: 24px; margin-left: auto; fill: none; stroke: #fbfbfe; stroke-width: 2.5; }
.banner {
  position: relative;
  z-index: 2;
  flex: none;
  height: 92px;
  display: flex;
  align-items: center;
  justify-content: space-between;
  padding: 2px 50px 0 33px;
  background: #183f7d;
  border-bottom: 2px solid #1f4e98;
  box-shadow: 0 3px 8px rgba(0,0,0,.12);
  color: #f4f6fa;
  font-size: 27.400px;
}
.banner p { margin: 0; }
.banner-x { width: 20px; height: 20px; fill: none; stroke: #cfdaee; stroke-width: 2.5; }

/* app page */
.page { flex: 1; min-height: 0; overflow: hidden; background: #f9fafb; }
.container { width: 2592px; margin: 0 auto; padding-top: 58px; }
.title { margin: 0; font-size: 66px; line-height: 74px; font-weight: 700; letter-spacing: -1.050px; color: #1f2937; }
.lede { margin: 24px 0 0; font-size: 34px; line-height: 54px; color: #4b5563; }
.role-tabs {
  margin-top: 73px;
  height: 90px;
  padding: 8px;
  display: grid;
  grid-template-columns: repeat(7, 1fr);
  background: #f3f4f6;
  border-radius: 12px;
}
.role {
  display: flex;
  align-items: center;
  justify-content: center;
  gap: 9px;
  border-radius: 8px;
  min-width: 0;
  font-size: 31px;
  font-weight: 500;
  color: #6b7280;
  white-space: nowrap;
}
.role-on { background: #f9fafb; color: #374151; box-shadow: 0 2px 3px rgba(0,0,0,.06); }
.ico { width: 36px; height: 36px; fill: none; stroke: currentColor; stroke-width: 2; stroke-linecap: round; stroke-linejoin: round; }
.ico-sm { width: 22px; height: 22px; }
.card {
  background: #fff;
  border: 2px solid #e5e7eb;
  border-radius: 16px;
  box-shadow: 0 2px 4px rgba(0,0,0,.05);
}
.user-card {
  margin-top: 54px;
  height: 220px;
  padding: 0 54px;
  display: flex;
  align-items: center;
}
.user-ico { width: 72px; height: 72px; fill: none; stroke: #2563eb; stroke-width: 2; stroke-linecap: round; stroke-linejoin: round; }
.user-text { margin-left: 27px; padding-top: 12px; }
.user-name { margin: 0; font-size: 44px; line-height: 56px; font-weight: 600; letter-spacing: -1.900px; color: #374151; }
.user-mail { margin: 0; font-size: 30px; line-height: 54px; color: #6b7280; }
.pill {
  margin-left: 26px;
  height: 48px;
  padding: 0 24px;
  display: flex;
  align-items: center;
  border-radius: 24px;
  background: #fee2e2;
  color: #991b1b;
  font-size: 27px;
  font-weight: 500;
}
.section { margin-top: 55px; padding: 54px; }
.sec-title { margin: 0; font-size: 52px; line-height: 56px; font-weight: 600; letter-spacing: -2.100px; color: #374151; }
.sec-sub { margin: 12px 0 0; font-size: 30.400px; line-height: 44px; color: #6b7280; }
.grid { margin-top: 53px; display: grid; grid-template-columns: repeat(3, 1fr); gap: 36px; }
.perm {
  height: 251px;
  padding: 36px;
  background: #f0fdf4;
  border: 2px solid #bbf7d0;
  border-radius: 16px;
}
.perm-ico { width: 56px; height: 56px; fill: none; stroke: #374151; stroke-width: 2; stroke-linecap: round; stroke-linejoin: round; }
.perm h3 { margin: 22px 0 0; font-size: 34.500px; line-height: 50px; font-weight: 500; color: #374151; }
.perm p { margin: 3px 0 0; font-size: 30px; line-height: 44px; color: #4b5563; }

/* dock */
.dock {
  position: absolute;
  left: 73px;
  top: 2116px;
  width: 3309px;
  height: 107px;
  padding: 14px 0 0 13px;
  display: flex;
  align-items: flex-start;
  gap: 19.450px;
  border-radius: 30px;
  border: 2px solid rgba(150,150,140,.45);
  background: linear-gradient(to right, #5e605a 0, #60625b 34%, #6b655b 38%, #62635c 48%, #696b62 85%, #7d7362 90%, #a5a078 95.500%, #b9b587 100%);
}
.app { position: relative; width: 70px; height: 70px; }
.app svg { width: 70px; height: 70px; overflow: visible; }
.app.on::after {
  content: "";
  position: absolute;
  left: 32px; top: 80px;
  width: 7px; height: 7px;
  border-radius: 50%;
  background: #050505;
}
.app-ov svg { width: 80px; height: 90px; margin: -12px 0 0 -5px; }
.badge {
  position: absolute;
  top: -9px; right: -10px;
  min-width: 32px;
  height: 34px;
  padding: 0 5px;
  display: flex;
  align-items: center;
  justify-content: center;
  border-radius: 50%;
  background: #e25041;
  color: #fff;
  font-size: 20px;
  font-weight: 400;
}
.badge-wide { width: 52px; right: -9px; font-size: 17px; letter-spacing: -.5px; padding: 0; }
.dock-sep { width: 2px; height: 80px; margin: 0 9px; background: #33352f; }
.dock-sep2 { margin: 0 16px 0 9px; }
.doc { width: 56px; height: 82px; margin-top: -6px; }
.doc svg { width: 56px; height: 82px; }
.mini { width: 26px; height: 56px; padding-top: 30px; }
.mini svg { width: 26px; height: 26px; }
.mini1 { margin-left: 54px; }
.mini2 { margin-left: 44px; }
.trash { width: 64px; height: 82px; margin-top: -8px; margin-left: 2px; }
.trash svg { width: 64px; height: 82px; }
.beta { font-family: "Liberation Sans", sans-serif; font-size: 11px; font-weight: 700; font-style: italic; fill: #fff; }
.cal-m { font-family: Inter, sans-serif; font-size: 12px; font-weight: 500; fill: #fff; text-anchor: middle; }
.cal-d { font-family: Inter, sans-serif; font-size: 40px; font-weight: 300; fill: #222; text-anchor: middle; }
.tv-t { font-family: Inter, sans-serif; font-size: 30px; font-weight: 500; fill: #fff; text-anchor: middle; }
.pdf-t { font-family: Inter, sans-serif; font-size: 11px; fill: #666; text-anchor: middle; }
```
